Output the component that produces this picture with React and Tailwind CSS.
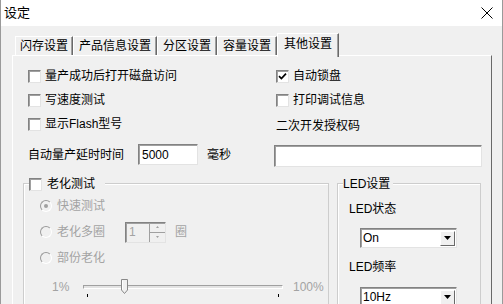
import React from "react";

// classic win32 settings dialog, "其他设置" page
const sunken =
  "border border-t-[#828282] border-l-[#828282] border-r-[#e3e3e3] border-b-[#e3e3e3] shadow-[inset_1px_1px_0_#a0a0a0]";

function CheckBox({ checked = false }) {
  return (
    <span className={`w-[13px] h-[13px] shrink-0 bg-white flex items-center justify-center ${sunken}`}>
      {checked && (
        <svg width="9" height="9" viewBox="0 0 9 9">
          <path d="M1 4.2 L3.4 6.6 L8 1.6" fill="none" stroke="#000" strokeWidth="1.7" />
        </svg>
      )}
    </span>
  );
}

function Check({ label, checked }) {
  return (
    <div className="h-[24px] flex items-center gap-[4px]">
      <CheckBox checked={checked} />
      <span>{label}</span>
    </div>
  );
}

function Radio({ label, selected, children, className = "h-[24px]" }) {
  return (
    <div className={`flex items-center ${className}`}>
      <span className="w-[12px] h-[12px] shrink-0 rounded-full bg-[#f0f0f0] border border-t-[#9a9a9a] border-l-[#9a9a9a] border-r-white border-b-white flex items-center justify-center">
        {selected && <span className="w-[4px] h-[4px] rounded-full bg-[#a0a0a0]" />}
      </span>
      <span className="ml-[5px] text-[#a3a3a3]">{label}</span>
      {children}
    </div>
  );
}

function Combo({ value }) {
  return (
    <div className={`w-[97px] h-[20px] bg-white flex items-center justify-between pl-[2px] pr-[1px] ${sunken}`}>
      <span className="leading-[14px]">{value}</span>
      <span className="w-[15px] h-[15px] bg-[#f0f0f0] border border-t-white border-l-white border-r-[#696969] border-b-[#696969] flex items-center justify-center">
        <svg width="7" height="4" viewBox="0 0 7 4">
          <path d="M0 0 H7 L3.5 4 Z" fill="#000" />
        </svg>
      </span>
    </div>
  );
}

const tabs = [
  { name: "闪存设置", w: "w-[58px]" },
  { name: "产品信息设置", w: "w-[84px]" },
  { name: "分区设置", w: "w-[60px]" },
  { name: "容量设置", w: "w-[60px]" },
];

export default function App() {
  return (
    <div className="w-[503px] h-[304px] overflow-hidden bg-[#f0f0f0] border-x border-[#9a9a9a] text-[12px] leading-[16px] text-black font-['Liberation_Sans','Noto_Sans_CJK_SC',sans-serif]">
      {/* title bar */}
      <div className="h-[26px] bg-white flex items-center justify-between pl-[3px] pr-[9px]">
        <span className="text-[13px]">设定</span>
        <svg width="12" height="12" viewBox="0 0 12 12">
          <path d="M0.5 0.5 L11.5 11.5 M11.5 0.5 L0.5 11.5" stroke="#000" strokeWidth="1" />
        </svg>
      </div>

      {/* tab strip */}
      <div className="mt-[7px] ml-[14px] h-[22px] flex items-end">
        {tabs.map((t) => (
          <div
            key={t.name}
            className={`${t.w} h-[19px] flex items-center justify-center border-t border-l border-white border-r border-r-[#696969] shadow-[inset_-1px_0_0_#a0a0a0]`}
          >
            {t.name}
          </div>
        ))}
        <div className="relative z-10 w-[62px] h-[24px] mb-[-2px] pb-[4px] flex items-center justify-center bg-[#f0f0f0] border-t border-l border-white border-r border-r-[#696969] shadow-[inset_-1px_0_0_#a0a0a0]">
          其他设置
        </div>
      </div>

      {/* page */}
      <div className="ml-[11px] w-[480px] h-[260px] border-t border-l border-white border-r border-r-[#696969] pt-[8px]">
        <div className="ml-[15px] flex">
          <div className="w-[246px] flex flex-col">
            <Check label="量产成功后打开磁盘访问" />
            <Check label="写速度测试" />
            <Check label="显示Flash型号" />
            <div className="mt-[8px] h-[21px] flex items-center">
              <span className="w-[110px]">自动量产延时时间</span>
              <div className={`w-[60px] h-[21px] bg-white flex items-center pl-[3px] ${sunken}`}>5000</div>
              <span className="ml-[9px]">毫秒</span>
            </div>
          </div>
          <div className="w-[208px] flex flex-col">
            <div className="pl-[2px]">
              <Check label="自动锁盘" checked />
              <Check label="打印调试信息" />
            </div>
            <div className="h-[28px] flex items-center pl-[2px]">二次开发授权码</div>
            <div className={`mt-[5px] w-[208px] h-[22px] bg-white ${sunken}`} />
          </div>
        </div>

        <div className="mt-[16px] ml-[10px] flex">
          {/* aging test group */}
          <div className="relative w-[306px] h-[140px] border border-[#cdcdcd] shadow-[inset_1px_1px_0_#fff] pt-[10px] pl-[16px]">
            <div className="absolute left-[5px] -top-[8px] h-[16px] flex items-center gap-[5px] bg-[#f0f0f0] pr-[10px]">
              <CheckBox />
              <span>老化测试</span>
            </div>
            <Radio label="快速测试" selected />
            <Radio label="老化多圈" className="h-[28px]">
              <div className={`ml-[20px] w-[41px] h-[21px] flex bg-[#f0f0f0] ${sunken}`}>
                <span className="flex-1 pl-[3px] leading-[19px] text-[#a3a3a3]">1</span>
                <div className="w-[16px] flex flex-col border-l border-[#a0a0a0]">
                  <span className="flex-1 flex items-center justify-center border-b border-[#a0a0a0]">
                    <svg width="3" height="2" viewBox="0 0 3 2"><path d="M0 2 L1.5 0 L3 2 Z" fill="#a0a0a0" /></svg>
                  </span>
                  <span className="flex-1 flex items-center justify-center">
                    <svg width="3" height="2" viewBox="0 0 3 2"><path d="M0 0 H3 L1.5 2 Z" fill="#a0a0a0" /></svg>
                  </span>
                </div>
              </div>
              <span className="ml-[9px] text-[#a3a3a3]">圈</span>
            </Radio>
            <Radio label="部份老化" />
            <div className="h-[34px] flex items-center ml-[12px] text-[#a3a3a3]">
              <span className="w-[31px]">1%</span>
              <div className="relative w-[200px] h-[4px] border border-t-[#a0a0a0] border-l-[#a0a0a0] border-r-white border-b-white bg-[#e3e3e3]">
                <svg className="absolute left-[37px] -top-[7px]" width="7" height="15" viewBox="0 0 7 15">
                  <path d="M0.5 0.5 H6.5 V11 L3.5 14.5 L0.5 11 Z" fill="#f0f0f0" stroke="#888" strokeWidth="1" />
                  <path d="M1.5 1.5 V10.5" stroke="#fff" strokeWidth="1" />
                </svg>
                <span className="absolute left-[3px] top-[8px] w-px h-[3px] bg-black" />
                <span className="absolute right-[3px] top-[8px] w-px h-[3px] bg-black" />
              </div>
              <span className="ml-[10px]">100%</span>
            </div>
          </div>

          {/* LED group */}
          <div className="relative ml-[8px] w-[144px] h-[140px] border border-[#cdcdcd] shadow-[inset_1px_1px_0_#fff] pt-[13px] pl-[11px]">
            <div className="absolute left-[5px] -top-[8px] h-[16px] flex items-center bg-[#f0f0f0] pr-[3px]">
              LED设置
            </div>
            <div className="h-[24px] flex items-center">LED状态</div>
            <div className="mt-[7px] ml-[11px]">
              <Combo value="On" />
            </div>
            <div className="mt-[7px] h-[24px] flex items-center">LED频率</div>
            <div className="mt-[8px] ml-[11px]">
              <Combo value="10Hz" />
            </div>
          </div>
        </div>
      </div>
    </div>
  );
}
